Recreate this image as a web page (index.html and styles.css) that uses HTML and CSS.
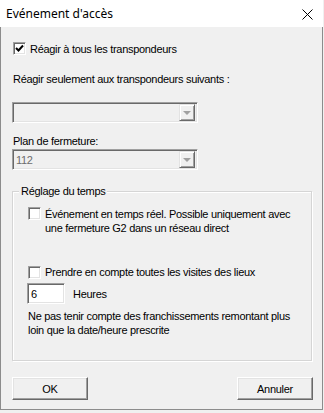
FILE: index.html
```html
<!DOCTYPE html>
<html lang="fr">
<head>
  <meta charset="UTF-8" />
  <title>Evénement d'accès</title>
  <link rel="stylesheet" href="styles.css">
</head>
<body>
  <div class="window">
    <div class="titlebar">
      <span class="title">Evénement d'accès</span>
      <svg class="close" width="11" height="11" viewBox="0 0 11 11">
        <path d="M0.5 0.5 L10.5 10.5 M10.5 0.5 L0.5 10.5" stroke="#000" stroke-width="1" />
      </svg>
    </div>

    <div class="content">
      <div class="check row-all">
        <span class="box">
          <svg width="9" height="9" viewBox="0 0 9 9">
            <path d="M1 4 L3.5 6.5 L8 1.5" fill="none" stroke="#000" stroke-width="2" />
          </svg>
        </span>
        <span>Réagir à tous les transpondeurs</span>
      </div>

      <div class="label label-only">Réagir seulement aux transpondeurs suivants :</div>
      <div class="combo combo-first">
        <span class="value"></span>
        <span class="drop"><span class="arrow"></span></span>
      </div>

      <div class="label label-plan">Plan de fermeture:</div>
      <div class="combo combo-plan">
        <span class="value">112</span>
        <span class="drop"><span class="arrow"></span></span>
      </div>

      <div class="group">
        <div class="group-title">Réglage du temps</div>

        <div class="check row-live">
          <span class="box"></span>
          <span>Événement en temps réel. Possible uniquement avec<br>une fermeture G2 dans un réseau direct</span>
        </div>

        <div class="check row-visits">
          <span class="box"></span>
          <span>Prendre en compte toutes les visites des lieux</span>
        </div>

        <div class="hours">
          <span class="field">6</span>
          <span>Heures</span>
        </div>

        <div class="note">Ne pas tenir compte des franchissements remontant plus<br>loin que la date/heure prescrite</div>
      </div>

      <div class="buttons">
        <button class="btn">OK</button>
        <button class="btn">Annuler</button>
      </div>
    </div>
  </div>
</body>
</html>
```

FILE: styles.css
```css
* {
  box-sizing: border-box;
}

body {
  margin: 0;
  background-color: #f0f0f0;
  font-family: 'Liberation Sans', Arial, sans-serif;
  font-size: 11px;
  letter-spacing: -0.3px;
  color: #000;
}

.window {
  width: 323px;
  height: 410px;
  background-color: #f0f0f0;
  border: 1px solid #8c8c8c;
  border-top: none;
  display: flex;
  flex-direction: column;
}

.titlebar {
  height: 27px;
  background-color: #fff;
  margin: 0 -1px 0 -1px;
  display: flex;
  align-items: center;
  justify-content: space-between;
  padding: 0 10px 0 6px;
}

.title {
  font-family: 'Noto Sans', sans-serif;
  font-size: 12px;
  letter-spacing: 0;
  margin-top: -1px;
}

.close {
  display: block;
  margin-top: 1px;
}

.content {
  padding: 0 10px 0 11px;
  display: flex;
  flex-direction: column;
}

.check {
  display: flex;
  align-items: flex-start;
  gap: 4px;
  line-height: 14px;
}

.box {
  width: 13px;
  height: 13px;
  flex: none;
  background-color: #fff;
  border: 1px solid;
  border-color: #a0a0a0 #fff #fff #a0a0a0;
  box-shadow: inset 1px 1px #696969, inset -1px -1px #e3e3e3;
  display: flex;
  align-items: center;
  justify-content: center;
}

.row-all {
  margin-top: 15px;
  padding-left: 1px;
}

.label {
  line-height: 14px;
  padding-left: 1px;
}

.label-only {
  margin-top: 16px;
}

.label-plan {
  margin-top: 11px;
}

.combo {
  width: 186px;
  height: 21px;
  border: 1px solid;
  border-color: #a0a0a0 #fff #fff #a0a0a0;
  box-shadow: inset 1px 1px #696969, inset -1px -1px #e3e3e3;
  display: flex;
  align-items: center;
  padding: 2px;
}

.combo-first {
  margin-top: 16px;
}

.combo-plan {
  margin-top: 1px;
}

.value {
  flex: 1;
  color: #6d6d6d;
  padding-left: 1px;
}

.drop {
  width: 16px;
  height: 17px;
  border: 1px solid;
  border-color: #e3e3e3 #696969 #696969 #e3e3e3;
  box-shadow: inset 1px 1px #fff, inset -1px -1px #a0a0a0;
  display: flex;
  align-items: center;
  justify-content: center;
}

.arrow {
  width: 0;
  height: 0;
  border-left: 4px solid transparent;
  border-right: 4px solid transparent;
  border-top: 4px solid #a0a0a0;
}

.group {
  margin-top: 21px;
  width: 300px;
  border: 1px solid #d5d5d5;
  box-shadow: 1px 1px #fff, inset 1px 1px #fff;
  padding: 0 0 23px 15px;
}

.group-title {
  margin: -8px 0 0 -9px;
  padding: 0 2px;
  width: fit-content;
  background-color: #f0f0f0;
  line-height: 14px;
}

.row-live {
  margin-top: 9px;
}

.row-visits {
  margin-top: 30px;
}

.row-visits .box {
  margin-top: 1px;
}

.hours {
  margin-top: 4px;
  display: flex;
  align-items: center;
  gap: 8px;
  margin-left: -1px;
}

.field {
  width: 38px;
  height: 21px;
  background-color: #fff;
  border: 1px solid;
  border-color: #a0a0a0 #fff #fff #a0a0a0;
  box-shadow: inset 1px 1px #696969, inset -1px -1px #e3e3e3;
  padding: 3px 0 0 3px;
  line-height: 14px;
}

.note {
  margin-top: 5px;
  line-height: 14px;
}

.buttons {
  margin-top: 16px;
  margin-right: -1px;
  display: flex;
  justify-content: space-between;
}

.btn {
  width: 76px;
  height: 23px;
  font-family: inherit;
  font-size: 11px;
  letter-spacing: -0.3px;
  color: #000;
  background-color: #f0f0f0;
  border: 1px solid;
  border-color: #fff #696969 #696969 #fff;
  box-shadow: inset -1px -1px #a0a0a0, inset 1px 1px #e3e3e3;
  padding: 0;
}
```
